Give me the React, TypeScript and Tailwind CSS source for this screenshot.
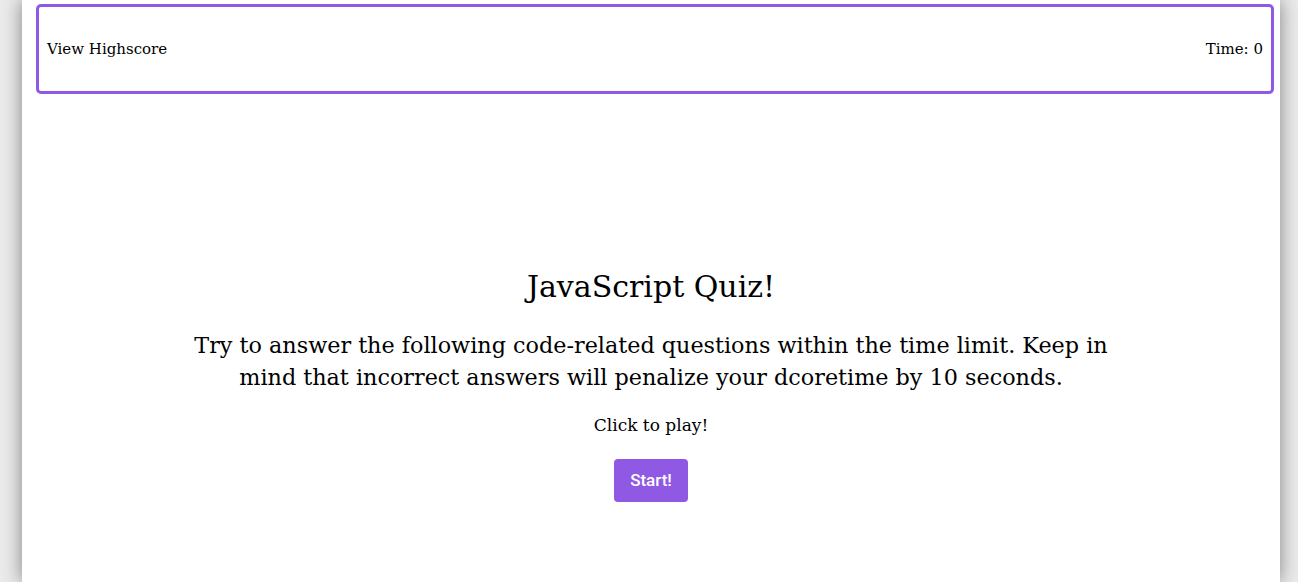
import React from 'react';

const slab = { fontFamily: '"DejaVu Serif", "Liberation Serif", serif' };

export default function App() {
  return (
    <div className="min-h-screen bg-[#ebebeb]">
      <div
        className="ml-[22px] min-h-screen w-[1258px] bg-white pt-[4px] shadow-[0_0_18px_rgba(0,0,0,0.45)]"
        style={slab}
      >
        <header className="ml-[14px] mr-[6px] flex h-[90px] items-center justify-between rounded-[5px] border-[3px] border-[#8f59e3] px-[8px] text-[15px] text-black">
          <span>View Highscore</span>
          <span>Time: 0</span>
        </header>

        <main className="mt-[174px] flex flex-col items-center text-center text-black">
          <h1 className="text-[30px] leading-[38px]">JavaScript Quiz!</h1>
          <p className="mt-[23px] max-w-[950px] text-[22.3px] leading-[32px]">
            Try to answer the following code-related questions within the time limit. Keep in mind
            that incorrect answers will penalize your dcoretime by 10 seconds.
          </p>
          <p className="mt-[20px] text-[17px] leading-[24px]">Click to play!</p>
          <button
            className="mt-[22px] h-[43px] w-[74px] rounded-[4px] bg-[#8f59e3] text-[17px] font-medium text-white"
            style={{ fontFamily: 'Roboto, "Liberation Sans", sans-serif' }}
          >
            Start!
          </button>
        </main>
      </div>
    </div>
  );
}
